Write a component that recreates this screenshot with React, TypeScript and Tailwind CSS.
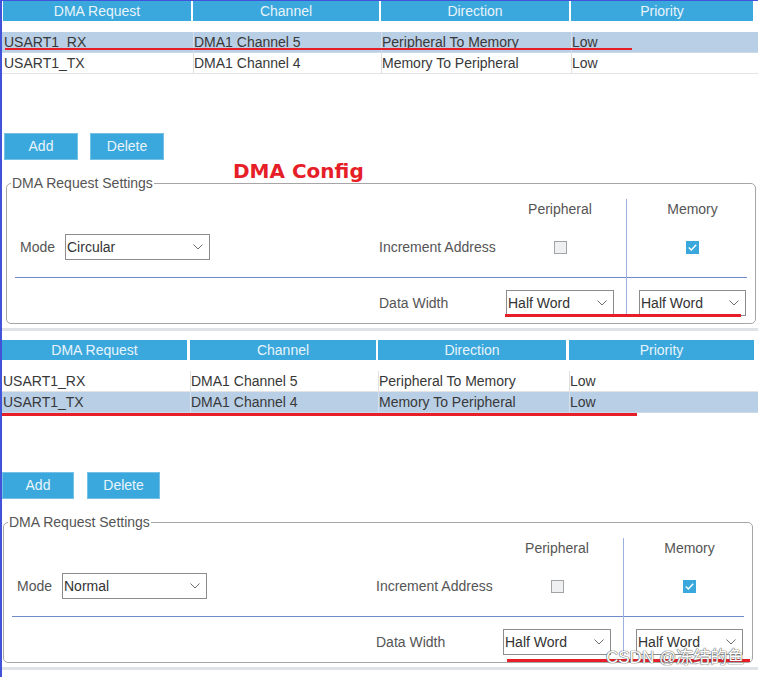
import React from "react";

type Col = { w: string; ml: string };

const COLS_A: Col[] = [
  { w: "w-[188px]", ml: "ml-[1px]" },
  { w: "w-[186px]", ml: "ml-[2px]" },
  { w: "w-[188px]", ml: "ml-[2px]" },
  { w: "w-[182px]", ml: "ml-[2px]" },
];

const COLS_B: Col[] = [
  { w: "w-[185px]", ml: "ml-0" },
  { w: "w-[186px]", ml: "ml-[3px]" },
  { w: "w-[188px]", ml: "ml-[2px]" },
  { w: "w-[185px]", ml: "ml-[3px]" },
];

const HEADERS = ["DMA Request", "Channel", "Direction", "Priority"];

const ROWS = [
  ["USART1_RX", "DMA1 Channel 5", "Peripheral To Memory", "Low"],
  ["USART1_TX", "DMA1 Channel 4", "Memory To Peripheral", "Low"],
];

function Chevron() {
  return (
    <svg width="10" height="6" viewBox="0 0 10 6" fill="none">
      <polyline points="0.5,0.5 5,5 9.5,0.5" stroke="#6b6b6b" strokeWidth="1" />
    </svg>
  );
}

function Select({ value, className }: { value: string; className: string }) {
  return (
    <div
      className={`${className} h-[26px] border border-[#8c8c8c] bg-white flex items-center justify-between pl-[1px] pr-[6px] text-[#333]`}
    >
      <span className="whitespace-nowrap">{value}</span>
      <Chevron />
    </div>
  );
}

function Checkbox({ checked }: { checked?: boolean }) {
  if (!checked) {
    return <div className="w-[13px] h-[13px] border border-[#a3a3a3] bg-[#eef0f2]" />;
  }
  return (
    <div className="w-[13px] h-[13px] bg-[#3aa8dc] flex items-center justify-center">
      <svg width="9" height="7" viewBox="0 0 9 7" fill="none">
        <polyline points="0.8,3.6 3.3,6 8.2,0.8" stroke="#fff" strokeWidth="1.4" />
      </svg>
    </div>
  );
}

type PanelProps = {
  cols: Col[];
  selected: number;
  mode: string;
  addClass: string;
  delClass: string;
  fsClass: string;
  className?: string;
  children?: React.ReactNode;
};

function Panel({ cols, selected, mode, addClass, delClass, fsClass, className, children }: PanelProps) {
  return (
    <div className={`relative ${className ?? ""}`}>
      {/* table header */}
      <div className="flex h-[20px]">
        {HEADERS.map((h, i) => (
          <div
            key={h}
            className={`${cols[i].w} ${cols[i].ml} bg-[#3aa8dc] text-center text-[#e8f4fb] leading-[20px]`}
          >
            {h}
          </div>
        ))}
      </div>

      {/* table rows */}
      <div className="mt-[11px]">
        {ROWS.map((row, r) => (
          <div
            key={r}
            className={`flex h-[21px] border-b ${
              r === selected ? "bg-[#b9cfe6] border-[#cbd9e9]" : "bg-white border-[#e3e3e3]"
            }`}
          >
            {row.map((cell, i) => (
              <div
                key={i}
                className={`${cols[i].w} ${cols[i].ml} leading-[20px] whitespace-nowrap text-[#383838] ${
                  i === 0 ? "pl-[1px]" : r === selected ? "border-l border-[#d5e0ec]" : "border-l border-[#e0e0e0]"
                }`}
              >
                {cell}
              </div>
            ))}
          </div>
        ))}
      </div>

      {/* buttons */}
      <div className="flex mt-[59px]">
        <button className={`${addClass} h-[27px] bg-[#3aa8dc] border border-[#74c0e6] text-[#e8f4fb]`}>Add</button>
        <button className={`${delClass} h-[27px] bg-[#3aa8dc] border border-[#74c0e6] text-[#e8f4fb]`}>Delete</button>
      </div>

      {/* settings */}
      <fieldset className={`${fsClass} w-[750px] mt-[15px] border border-[#a6a6a6] rounded-[5px] pb-[7px]`}>
        <legend className="ml-[4px] px-[1px] text-[14px] leading-[16px] text-[#555]">DMA Request Settings</legend>
        <div className="grid grid-cols-[364px_123px_132px_1px_127px] grid-rows-[23px_50px_5px_1px_38px] pt-[8px] text-[#555]">
          <div className="col-start-3 row-start-1 text-center mt-[2px] leading-[16px]">Peripheral</div>
          <div className="col-start-5 row-start-1 text-center pl-[4px] mt-[2px] leading-[16px]">Memory</div>

          <div className="col-start-1 row-start-2 flex items-center pl-[13px]">
            <span className="w-[45px]">Mode</span>
            <Select value={mode} className="w-[145px]" />
          </div>
          <div className="col-start-2 row-start-2 flex items-center pl-[8px] whitespace-nowrap">Increment Address</div>
          <div className="col-start-3 row-start-2 flex items-center justify-center">
            <Checkbox />
          </div>
          <div className="col-start-5 row-start-2 flex items-center justify-center pl-[4px]">
            <Checkbox checked />
          </div>

          <div className="col-span-full row-start-4 ml-[8px] mr-[7px] bg-[#6f8bcb]" />
          <div className="col-start-4 row-start-1 row-span-5 bg-[#9db1df]" />

          <div className="col-start-2 row-start-5 self-end pl-[8px] h-[26px] leading-[26px] whitespace-nowrap">
            Data Width
          </div>
          <div className="col-start-3 row-start-5 self-end flex justify-center">
            <Select value="Half Word" className="w-[108px]" />
          </div>
          <div className="col-start-5 row-start-5 self-end flex justify-center pl-[4px]">
            <Select value="Half Word" className="w-[107px]" />
          </div>
        </div>
      </fieldset>

      <div className="mt-[4px] h-[3px] bg-[#dfe2e7]" />

      {children}
    </div>
  );
}

export default function App() {
  return (
    <div className="w-[758px] h-[677px] overflow-hidden bg-white border-l-2 border-t border-[#4253d9] font-['Liberation_Sans',Arial,sans-serif] text-[14px]">
      <Panel
        cols={COLS_A}
        selected={0}
        mode="Circular"
        addClass="ml-[2px] w-[74px]"
        delClass="ml-[12px] w-[74px]"
        fsClass="ml-[4px]"
      >
        <div className="absolute left-[3px] top-[47px] w-[627px] h-[2px] bg-[#e61e28]" />
        <div className="absolute left-[231px] top-[160px] font-['DejaVu_Sans',sans-serif] font-bold text-[20px] leading-[21px] text-[#e61e28] whitespace-nowrap">
          DMA Config
        </div>
        <div className="absolute left-[503px] top-[313px] w-[236px] h-[3px] bg-[#e61e28]" />
      </Panel>

      <Panel
        cols={COLS_B}
        selected={1}
        mode="Normal"
        addClass="ml-0 w-[72px]"
        delClass="ml-[13px] w-[73px]"
        fsClass="ml-[1px]"
        className="mt-[9px]"
      >
        <div className="absolute left-0 top-[73px] w-[635px] h-[3px] bg-[#e61e28]" />
        <div className="absolute left-[505px] top-[319px] w-[243px] h-[3px] bg-[#e61e28]" />
        <div className="absolute left-[604px] top-[310px] text-[17px] leading-[16px] text-white whitespace-nowrap font-['Liberation_Sans','Noto_Sans_CJK_SC',sans-serif] [text-shadow:0_0_1px_#666,0_0_1px_#666,0_0_1px_#666]">
          CSDN @冻结的鱼
        </div>
      </Panel>
    </div>
  );
}
